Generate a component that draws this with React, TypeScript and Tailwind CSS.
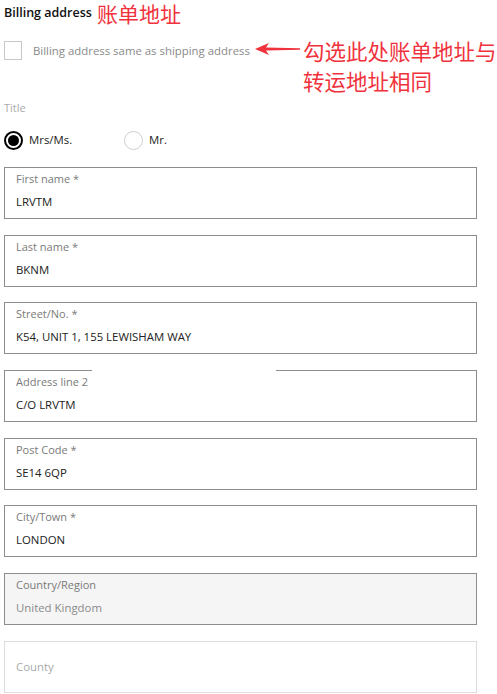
import React from "react";

const F = { fontFamily: '"Open Sans", "Noto Sans", "Noto Sans CJK SC", sans-serif' };
const CJK = { fontFamily: '"Noto Sans CJK SC", sans-serif' };

function Box({ label, value, valueColor = "text-[#222]", extra = "border-[#8c8c8c]" }: { label: string; value: string; valueColor?: string; extra?: string }) {
  return (
    <div className={`w-[473px] h-[52px] border ${extra} px-[11px] pt-[2px]`}>
      <div className="text-[11px] leading-[18px] text-[#7a7a7a]">{label}</div>
      <div className={`mt-[5px] text-[11.4px] leading-[18px] ${valueColor}`}>{value}</div>
    </div>
  );
}

export default function App() {
  return (
    <div className="w-[497px] h-[694px] bg-white overflow-hidden pl-[4px]" style={F}>
      <div className="flex items-center">
        <span className="text-[12.5px] font-semibold text-[#111] leading-[20px]">Billing address</span>
        <span className="ml-[5px] text-[21px] leading-[28px] -my-[1px] text-[#f0323c] whitespace-nowrap" style={CJK}>账单地址</span>
      </div>
      <div className="flex mt-[15px]">
        <div className="flex items-center h-[19px]">
          <div className="w-[18px] h-[19px] border border-[#c8c8c8]" />
          <span className="ml-[11px] text-[11.4px] text-[#8a8a8a]">Billing address same as shipping address</span>
        </div>
        <svg width="46" height="14" viewBox="0 0 46 14" className="ml-[5px] mt-[1px]">
          <path d="M0 7 L14 1 L11 5.6 L45 6.2 L45 7.8 L11 8.4 L14 13 Z" fill="#f0323c" />
        </svg>
        <div className="ml-[2px] -mt-[5px] text-[21.5px] leading-[30px] text-[#f0323c] whitespace-nowrap" style={CJK}>
          勾选此处账单地址与<br />转运地址相同
        </div>
      </div>
      <div className="mt-[3px] text-[11px] text-[#aaaaaa] leading-[18px]">Title</div>
      <div className="flex items-center mt-[13px] h-[20px]">
        <div className="flex items-center w-[120px]">
          <div className="w-[19px] h-[19px] rounded-full border-[2px] border-black flex items-center justify-center">
            <div className="w-[11px] h-[11px] rounded-full bg-black" />
          </div>
          <span className="ml-[6px] text-[11.4px] text-[#222]">Mrs/Ms.</span>
        </div>
        <div className="w-[19px] h-[19px] rounded-full border border-[#cfcfcf]" />
        <span className="ml-[6px] text-[11.4px] text-[#222]">Mr.</span>
      </div>
      <div className="mt-[17px] flex flex-col gap-[15.7px]">
        <Box label="First name *" value="LRVTM" />
        <Box label="Last name *" value="BKNM" />
        <Box label="Street/No. *" value="K54, UNIT 1, 155 LEWISHAM WAY" />
        <div className="relative">
          <Box label="Address line 2" value="C/O LRVTM" />
          <div className="absolute top-[-1px] left-[88px] w-[184px] h-[3px] bg-white" />
        </div>
        <Box label="Post Code *" value="SE14 6QP" />
        <Box label="City/Town *" value="LONDON" />
        <Box label="Country/Region" value="United Kingdom" valueColor="text-[#8a8a8a]" extra="border-[#8c8c8c] bg-[#f5f5f5]" />
        <div className="w-[473px] h-[52px] border border-[#dcdcdc] px-[11px] flex items-center">
          <span className="text-[11.4px] text-[#aaaaaa]">County</span>
        </div>
      </div>
    </div>
  );
}
